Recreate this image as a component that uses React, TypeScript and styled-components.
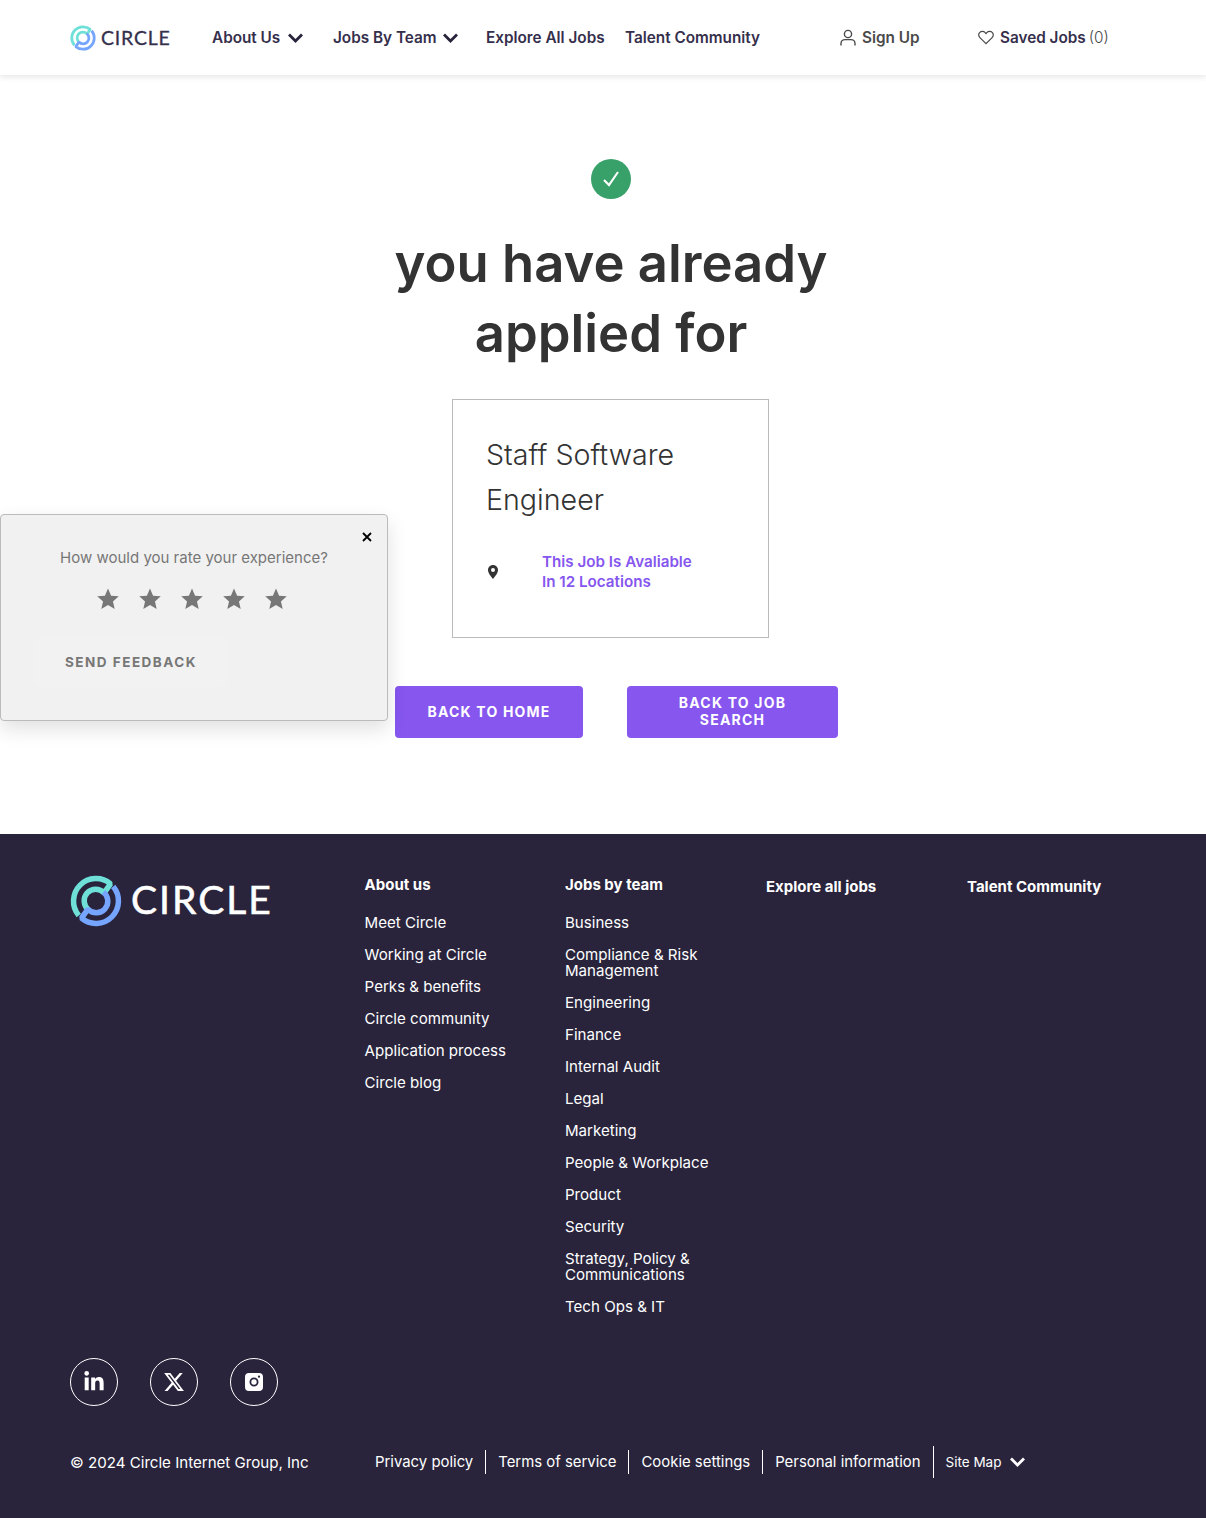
import { createGlobalStyle, styled } from "styled-components";
import { FaLinkedinIn, FaXTwitter } from "react-icons/fa6";

const GlobalStyle = createGlobalStyle`
  html, body { margin: 0; padding: 0; background: #fff; }
  body { font-family: Inter, "Open Sans", sans-serif; }
  * { box-sizing: border-box; }
  a { color: inherit; text-decoration: none; }
  ul { list-style: none; margin: 0; padding: 0; }
`;

const Page = styled.div`
  position: relative;
  width: 1206px;
  height: 1518px;
  overflow: hidden;
`;

const Header = styled.header`
  position: relative;
  z-index: 2;
  height: 75px;
  padding-left: 70px;
  display: flex;
  align-items: center;
  background: #fff;
  box-shadow: 0 2px 6px rgba(0, 0, 0, 0.1);
`;

const Brand = styled.a<{ $gap: number; $width?: number }>`
  display: flex;
  align-items: center;
  align-self: flex-start;
  gap: ${(p) => p.$gap}px;
  width: ${(p) => (p.$width ? `${p.$width}px` : "auto")};
`;

const HeaderBrand = styled(Brand)`
  align-self: center;
`;

const Wordmark = styled.span<{ $size: number; $color: string; $spacing: number; $lift: number }>`
  font-family: Lato, sans-serif;
  font-size: ${(p) => p.$size}px;
  font-weight: 400;
  letter-spacing: ${(p) => p.$spacing}px;
  color: ${(p) => p.$color};
  line-height: 1;
  margin-bottom: ${(p) => p.$lift}px;
  -webkit-text-stroke: 0.015em ${(p) => p.$color};
`;

const NavItem = styled.a<{ $width: number; $muted?: boolean }>`
  display: flex;
  align-items: center;
  width: ${(p) => p.$width}px;
  flex: none;
  white-space: nowrap;
  font-size: 15.3px;
  font-weight: 600;
  color: ${(p) => (p.$muted ? "#4a4a4a" : "#352f4c")};
`;

const Chevron = styled.svg<{ $gap: number }>`
  margin-left: ${(p) => p.$gap}px;
  flex: none;
`;

const NavIcon = styled.svg`
  margin-right: 6px;
  flex: none;
`;

const Count = styled.span`
  font-weight: 300;
  margin-left: 3px;
  color: #4a4a4a;
`;

const Main = styled.main`
  height: 759px;
  padding: 84px 0 0 16px;
  display: flex;
  flex-direction: column;
  align-items: center;
`;

const CheckBadge = styled.div`
  width: 40px;
  height: 40px;
  border-radius: 50%;
  background: #38a169;
  display: flex;
  align-items: center;
  justify-content: center;
`;

const Title = styled.h1`
  margin: 29px 0 31px;
  width: 480px;
  text-align: center;
  font-size: 52.6px;
  line-height: 70px;
  font-weight: 600;
  color: #333;
`;

const JobCard = styled.section`
  width: 317px;
  height: 239px;
  margin-left: -1px;
  border: 1px solid #bbb;
  padding: 32px 33px 0;
`;

const JobTitle = styled.h2`
  margin: 0;
  font-size: 28.6px;
  line-height: 45px;
  font-weight: 300;
  color: #333;
`;

const Availability = styled.div`
  margin-top: 30px;
  display: flex;
  align-items: center;
`;

const PinIcon = styled.svg`
  margin: 0 44px 0 2px;
  flex: none;
`;

const LocationsLink = styled.a`
  font-size: 15.2px;
  line-height: 20px;
  font-weight: 600;
  color: #8656ef;
`;

const ButtonRow = styled.div`
  margin: 48px 0 0 11px;
  display: flex;
  gap: 44px;
`;

const PrimaryButton = styled.a<{ $width: number }>`
  width: ${(p) => p.$width}px;
  height: 52px;
  padding: 0 28px 2px;
  border-radius: 4px;
  background: #8656ef;
  color: #fff;
  display: flex;
  align-items: center;
  justify-content: center;
  text-align: center;
  font-size: 14px;
  line-height: 17px;
  font-weight: 700;
  letter-spacing: 1.2px;
`;

const Feedback = styled.aside`
  position: absolute;
  z-index: 3;
  left: 0;
  top: 514px;
  width: 388px;
  height: 207px;
  border: 1px solid #bbb;
  border-radius: 4px;
  background: #f1f1f1;
  box-shadow: 0 8px 20px rgba(0, 0, 0, 0.12);
  display: flex;
  flex-direction: column;
  align-items: center;
  padding-top: 33px;
`;

const CloseButton = styled.svg`
  position: absolute;
  right: 15px;
  top: 17px;
`;

const Question = styled.p`
  margin: 0;
  font-size: 15px;
  line-height: 20px;
  font-weight: 400;
  color: #777;
`;

const Stars = styled.div`
  margin: 20px 4px 0 0;
  display: flex;
  gap: 20px;
`;

const SendButton = styled.a`
  align-self: flex-start;
  margin: 27px 0 0 32px;
  width: 195px;
  height: 50px;
  padding-left: 32px;
  border-radius: 8px;
  background: #f2f2f2;
  display: flex;
  align-items: center;
  font-size: 13.5px;
  font-weight: 700;
  letter-spacing: 1.5px;
  color: #777;
`;

const Footer = styled.footer`
  height: 684px;
  background: #29243c;
  color: #fff;
  padding: 41px 0 0 70px;
`;

const FooterTop = styled.div`
  display: grid;
  grid-template-columns: 294.6px 200.4px 201px 201px auto;
  height: 483px;
`;

const ColumnHeading = styled.a<{ $lone?: boolean }>`
  display: block;
  font-size: 15px;
  line-height: 20px;
  font-weight: 700;
  margin-top: ${(p) => (p.$lone ? "2px" : "0")};
`;

const LinkList = styled.ul`
  margin-top: 20px;
  display: flex;
  flex-direction: column;
  gap: 16px;
`;

const FooterLink = styled.a`
  display: block;
  font-size: 15.1px;
  line-height: 16px;
  font-weight: 400;
  max-width: 170px;
`;

const Socials = styled.div`
  display: flex;
  gap: 32px;
`;

const SocialLink = styled.a`
  width: 48px;
  height: 48px;
  border: 1px solid #fff;
  border-radius: 50%;
  display: flex;
  align-items: center;
  justify-content: center;
  font-size: 22px;
`;

const BottomBar = styled.div`
  margin-top: 40px;
  height: 32px;
  display: flex;
  align-items: center;
  font-size: 14.9px;
  line-height: 23px;
  font-weight: 400;
`;

const Copyright = styled.span`
  width: 305px;
  padding-top: 1px;
  font-size: 15.1px;
`;

const LegalLink = styled.a`
  padding: 1px 12px 0 0;
  margin-right: 12px;
  border-right: 1px solid #fff;

  &:last-of-type {
    border-right: none;
    margin-right: 0;
  }
`;

const SiteMap = styled.span`
  display: flex;
  align-items: center;
  height: 32px;
  border-left: 1px solid #fff;
  padding-left: 12px;
  font-size: 13.5px;
`;

const STAR =
  "M11 1.5 L13.8 8 L20.8 8.6 L15.5 13.2 L17.1 20 L11 16.4 L4.9 20 L6.5 13.2 L1.2 8.6 L8.2 8 Z";

const aboutLinks = [
  "Meet Circle",
  "Working at Circle",
  "Perks & benefits",
  "Circle community",
  "Application process",
  "Circle blog",
];

const teamLinks = [
  "Business",
  "Compliance & Risk Management",
  "Engineering",
  "Finance",
  "Internal Audit",
  "Legal",
  "Marketing",
  "People & Workplace",
  "Product",
  "Security",
  "Strategy, Policy & Communications",
  "Tech Ops & IT",
];

const legalLinks = ["Privacy policy", "Terms of service", "Cookie settings", "Personal information"];

function LogoMark({ size }: { size: number }) {
  const swirl = "M8.8 40.5 A22.5 22.5 0 0 1 40.5 8.8 L34.1 17.9 A11.5 11.5 0 1 0 18.6 34.8";
  return (
    <svg width={size} height={size} viewBox="0 0 52 52" fill="none">
      <path d={swirl} stroke="#6fe0d8" strokeWidth="5.5" strokeLinejoin="bevel" />
      <path d={swirl} stroke="#76a5ff" strokeWidth="5.5" strokeLinejoin="bevel" transform="rotate(180 26 26)" />
    </svg>
  );
}

function ChevronDown({ gap, color }: { gap: number; color: string }) {
  return (
    <Chevron $gap={gap} width="15" height="10" viewBox="0 0 15 10" fill="none">
      <path d="M1 1.5 L7.5 8 L14 1.5" stroke={color} strokeWidth="2.8" />
    </Chevron>
  );
}

export default function App() {
  return (
    <Page>
      <GlobalStyle />
      <Header>
        <HeaderBrand href="#" $gap={5} $width={142}>
          <LogoMark size={26} />
          <Wordmark $size={19.5} $color="#352f4c" $spacing={0.8} $lift={0}>
            CIRCLE
          </Wordmark>
        </HeaderBrand>
        <NavItem href="#" $width={121}>
          About Us
          <ChevronDown gap={8} color="#29243c" />
        </NavItem>
        <NavItem href="#" $width={153}>
          Jobs By Team
          <ChevronDown gap={6} color="#29243c" />
        </NavItem>
        <NavItem href="#" $width={139}>
          Explore All Jobs
        </NavItem>
        <NavItem href="#" $width={215}>
          Talent Community
        </NavItem>
        <NavItem href="#" $width={138} $muted>
          <NavIcon width="16" height="17" viewBox="0 0 16 17" fill="none" stroke="#4a4a4a" strokeWidth="1.4">
            <circle cx="8" cy="5" r="3.6" />
            <path d="M1 16.5 V14.5 C1 12 3 10.6 5 10.6 H11 C13 10.6 15 12 15 14.5 V16.5" />
          </NavIcon>
          Sign Up
        </NavItem>
        <NavItem href="#" $width={135}>
          <NavIcon width="16" height="15" viewBox="0 0 17 15" fill="none" stroke="#4a4a4a" strokeWidth="1.3">
            <path d="M8.5 14 L2 7.6 C0.3 5.9 0.4 3.4 1.9 2 C3.5 0.5 6 0.6 7.4 2.1 L8.5 3.3 L9.6 2.1 C11 0.6 13.5 0.5 15.1 2 C16.6 3.4 16.7 5.9 15 7.6 Z" />
          </NavIcon>
          Saved Jobs
          <Count>(0)</Count>
        </NavItem>
      </Header>

      <Main>
        <CheckBadge>
          <svg width="18" height="18" viewBox="0 0 18 18" fill="none">
            <path d="M2 10 L7 15 L16 2" stroke="#fff" strokeWidth="2.1" />
          </svg>
        </CheckBadge>
        <Title>you have already applied for</Title>
        <JobCard>
          <JobTitle>Staff Software Engineer</JobTitle>
          <Availability>
            <PinIcon width="10" height="14" viewBox="0 0 10 14">
              <path
                fillRule="evenodd"
                fill="#333"
                d="M5 0 C2.2 0 0 2.2 0 5 C0 8.5 5 14 5 14 C5 14 10 8.5 10 5 C10 2.2 7.8 0 5 0 Z M5 3 A2 2 0 1 1 5 7 A2 2 0 1 1 5 3 Z"
              />
            </PinIcon>
            <LocationsLink href="#">
              This Job Is Avaliable
              <br />
              In 12 Locations
            </LocationsLink>
          </Availability>
        </JobCard>
        <ButtonRow>
          <PrimaryButton href="#" $width={188}>
            BACK TO HOME
          </PrimaryButton>
          <PrimaryButton href="#" $width={211}>
            BACK TO JOB SEARCH
          </PrimaryButton>
        </ButtonRow>
      </Main>

      <Feedback>
        <CloseButton width="10" height="10" viewBox="0 0 10 10" fill="none">
          <path d="M1 1 L9 9 M9 1 L1 9" stroke="#000" strokeWidth="1.8" />
        </CloseButton>
        <Question>How would you rate your experience?</Question>
        <Stars>
          {[0, 1, 2, 3, 4].map((i) => (
            <svg key={i} width="22" height="22" viewBox="1 1 20 20">
              <path d={STAR} fill="#777" />
            </svg>
          ))}
        </Stars>
        <SendButton href="#">SEND FEEDBACK</SendButton>
      </Feedback>

      <Footer>
        <FooterTop>
          <Brand href="#" $gap={9}>
            <LogoMark size={52} />
            <Wordmark $size={39} $color="#fff" $spacing={2} $lift={3}>
              CIRCLE
            </Wordmark>
          </Brand>
          <div>
            <ColumnHeading href="#">About us</ColumnHeading>
            <LinkList>
              {aboutLinks.map((label) => (
                <li key={label}>
                  <FooterLink href="#">{label}</FooterLink>
                </li>
              ))}
            </LinkList>
          </div>
          <div>
            <ColumnHeading href="#">Jobs by team</ColumnHeading>
            <LinkList>
              {teamLinks.map((label) => (
                <li key={label}>
                  <FooterLink href="#">{label}</FooterLink>
                </li>
              ))}
            </LinkList>
          </div>
          <ColumnHeading href="#" $lone>
            Explore all jobs
          </ColumnHeading>
          <ColumnHeading href="#" $lone>
            Talent Community
          </ColumnHeading>
        </FooterTop>
        <Socials>
          <SocialLink href="#" aria-label="LinkedIn">
            <FaLinkedinIn />
          </SocialLink>
          <SocialLink href="#" aria-label="X">
            <FaXTwitter />
          </SocialLink>
          <SocialLink href="#" aria-label="Instagram">
            <svg width="18" height="18" viewBox="0 0 18 18">
              <path
                fill="#fff"
                fillRule="evenodd"
                d="M4 0 H14 A4 4 0 0 1 18 4 V14 A4 4 0 0 1 14 18 H4 A4 4 0 0 1 0 14 V4 A4 4 0 0 1 4 0 Z M9 4.5 A4.5 4.5 0 1 0 9 13.5 A4.5 4.5 0 1 0 9 4.5 Z M9 6.3 A2.7 2.7 0 1 1 9 11.7 A2.7 2.7 0 1 1 9 6.3 Z M14 2.6 A1.1 1.1 0 1 0 14 4.8 A1.1 1.1 0 1 0 14 2.6 Z"
              />
            </svg>
          </SocialLink>
        </Socials>
        <BottomBar>
          <Copyright>© 2024 Circle Internet Group, Inc</Copyright>
          {legalLinks.map((label) => (
            <LegalLink href="#" key={label}>
              {label}
            </LegalLink>
          ))}
          <SiteMap>
            Site Map
            <ChevronDown gap={9} color="#fff" />
          </SiteMap>
        </BottomBar>
      </Footer>
    </Page>
  );
}
